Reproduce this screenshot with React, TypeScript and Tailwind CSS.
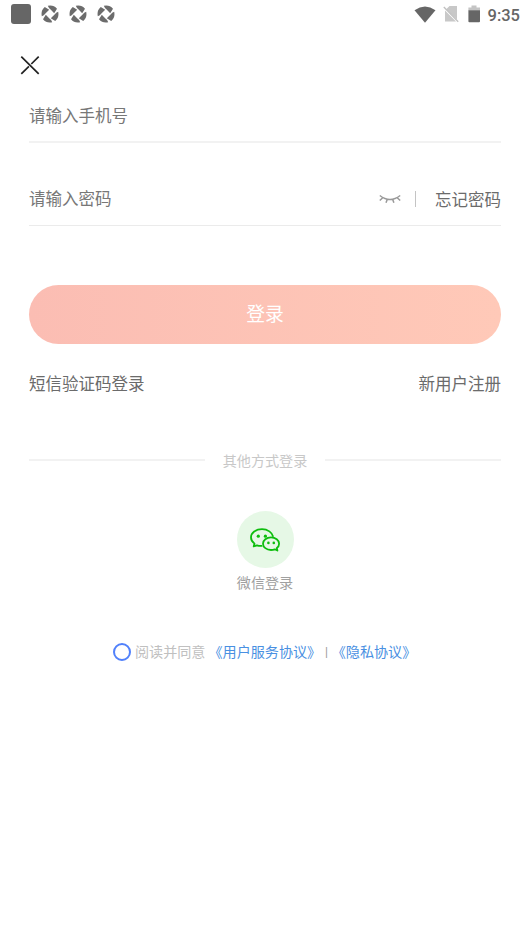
function NotificationIcon() {
  return (
    <svg viewBox="0 0 18 18" className="h-[18px] w-[18px]" fill="#6c6c6c">
      <path d="M6.8.8Q12.5-.4 16 3.8L13.2 8.2 9.6 4.4Q7.5 3 6.8.8z" />
      <path d="M6.8.8Q12.5-.4 16 3.8L13.2 8.2 9.6 4.4Q7.5 3 6.8.8z" transform="rotate(90 9 9)" />
      <path d="M6.8.8Q12.5-.4 16 3.8L13.2 8.2 9.6 4.4Q7.5 3 6.8.8z" transform="rotate(180 9 9)" />
      <path d="M6.8.8Q12.5-.4 16 3.8L13.2 8.2 9.6 4.4Q7.5 3 6.8.8z" transform="rotate(270 9 9)" />
    </svg>
  );
}

function StatusBar() {
  return (
    <div className="flex h-7 items-center justify-between pl-[11px] pr-[9px]">
      <div className="flex items-center">
        <span className="mr-[10px] h-5 w-5 rounded-[3px] bg-[#666]" />
        <div className="flex gap-[10px]">
          <NotificationIcon />
          <NotificationIcon />
          <NotificationIcon />
        </div>
      </div>
      <div className="flex items-center">
        <svg viewBox="0 0 22 17" className="mr-[7px] h-[17px] w-[22px]">
          <path d="M.5 4.2Q11-3.2 21.5 4.2L11 16.8z" fill="#666" />
        </svg>
        <svg viewBox="0 0 16 18" className="mr-[9px] h-[18px] w-4">
          <path d="M6.5 1H14v13.6L3.2 4.2zM2 5.4 13 16.6H2z" fill="#c8c8c8" />
          <path d="M.8 2 15.2 16.8" stroke="#c0c0c0" strokeWidth="1.3" />
        </svg>
        <svg viewBox="0 0 12 18" className="mr-2 h-[18px] w-3">
          <path d="M3.5.5h5v2H12v3H.4v-3h3.1z" fill="#c4c4c4" />
          <path d="M.4 5.2H12v11.1q0 1-1 1H1.4q-1 0-1-1z" fill="#666" />
        </svg>
        <span className="mt-1 font-[Roboto] text-[16.5px] leading-none font-medium text-[#666]">9:35</span>
      </div>
    </div>
  );
}

function WechatIcon() {
  return (
    <svg viewBox="0 0 32 26" className="h-[26px] w-8" fill="none" stroke="#0dbd0d" strokeWidth="1.8" strokeLinejoin="round">
      <path d="M13.3 18.8Q10.4 19.2 8 18.3L4.7 19.4 5.5 16.6C3.2 14.9 2 12.8 2 10.5 2 5.8 6.8 2.2 13 2.2c5.6 0 10.3 3.3 11.2 7.5" />
      <path d="M22 10.4c-4.5 0-8 2.8-8 6.3s3.5 6.3 8 6.3q2 0 3.8-.7l2.6 1.2-.6-2.5c1.5-1.1 2.3-2.6 2.3-4.3 0-3.5-3.6-6.3-8.1-6.3z" />
      <g fill="#0dbd0d" stroke="none">
        <circle cx="9.3" cy="9.2" r="1.6" />
        <circle cx="16.4" cy="9.2" r="1.6" />
        <circle cx="19.4" cy="15.9" r="1.3" />
        <circle cx="24.8" cy="15.9" r="1.3" />
      </g>
    </svg>
  );
}

export default function App() {
  return (
    <div className="min-h-screen w-full bg-white font-['Noto_Sans_CJK_SC',sans-serif]">
      <StatusBar />

      <header className="flex h-[60px] pt-[27px] pl-5">
        <svg viewBox="0 0 20 20" className="h-5 w-5" stroke="#222" strokeWidth="1.7" fill="none">
          <path d="M1.3 1.7 18.7 18.9M18.7 1.7 11.3 9M8.9 11.4 1.3 18.9" />
        </svg>
      </header>

      <main className="pr-7 pl-[29px]">
        <div className="flex h-[55px] items-center border-b-2 border-[#f2f2f2] pt-px text-[16.5px] text-[#777]">
          <span>请输入手机号</span>
        </div>

        <div className="mt-[29px] flex h-[54px] items-center justify-between border-b border-[#ebebeb] text-[16.5px]">
          <span className="text-[#777]">请输入密码</span>
          <div className="flex items-center">
            <svg viewBox="0 0 22 10" className="mt-px h-[10px] w-[22px]" fill="none" stroke="#999" strokeWidth="1.5">
              <path d="M.8 1.5Q11 9.5 21.2 1.5M3.7 3.8.8 6.5M8.2 5.5 7 8.8M13.7 5.5l1.2 3.3M18.2 3.8l3 2.7" />
            </svg>
            <span className="mt-px mr-[19px] ml-[14px] h-4 w-px bg-[#c4c4c4]" />
            <span className="mt-0.5 text-[#6b6b6b]">忘记密码</span>
          </div>
        </div>

        <button className="mt-[59px] block h-[59px] w-full rounded-full bg-linear-to-r from-[#fbbdb3] to-[#ffc9b8] pb-0.5 text-[18.8px] text-white">
          登录
        </button>

        <div className="mt-[27px] flex justify-between text-[16.5px] leading-6 text-[#6b6b6b]">
          <span>短信验证码登录</span>
          <span>新用户注册</span>
        </div>

        <div className="mt-[55px] flex items-center text-[14.1px] leading-5 text-[#c8c8c8]">
          <span className="h-[2px] flex-1 bg-[#f2f2f2]" />
          <span className="mx-[18px]">其他方式登录</span>
          <span className="h-[2px] flex-1 bg-[#f2f2f2]" />
        </div>

        <div className="mt-[41px] flex flex-col items-center">
          <div className="flex h-[57px] w-[57px] items-center justify-center rounded-full bg-[#e6f8e6]">
            <WechatIcon />
          </div>
          <span className="mt-1 text-[14.1px] leading-5 text-[#a0a0a0]">微信登录</span>
        </div>
      </main>

      <footer className="mt-12 flex items-center pl-[113px] text-[14.1px] leading-5 whitespace-nowrap text-[#c0c0c0]">
        <span className="mt-0.5 mr-1 h-[18px] w-[18px] rounded-full border-2 border-[#5181fb]" />
        <span>阅读并同意</span>
        <span className="ml-[3px] text-[#4990e2]">《用户服务协议》</span>
        <span className="mt-0.5 w-[10.5px] text-center font-[Roboto] text-[12px] text-[#999]">|</span>
        <span className="text-[#4990e2]">《隐私协议》</span>
      </footer>
    </div>
  );
}
